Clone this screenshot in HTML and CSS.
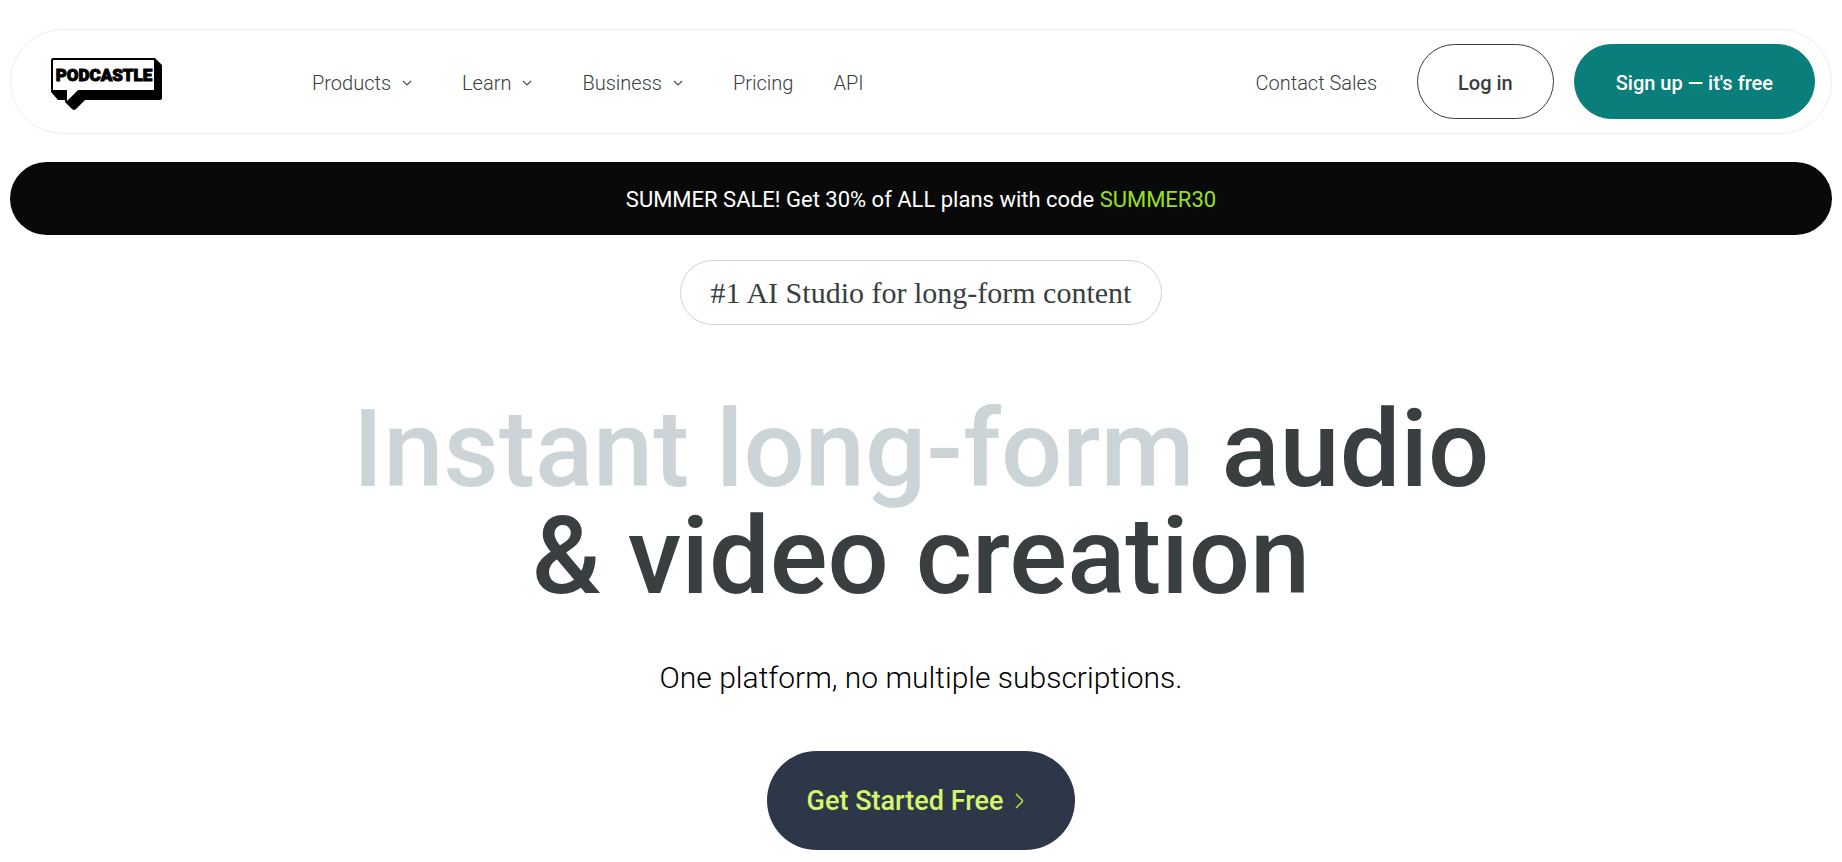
FILE: index.html
```
<!DOCTYPE html>
<html lang="en">
<head>
    <meta charset="UTF-8">
    <meta name="viewport" content="width=device-width, initial-scale=1.0">
    <title>Podcastle</title>
    <link rel="stylesheet" href="styles.css">
</head>
<body>

<header class="header">
    <a href="#" class="logo" aria-label="Podcastle home">
        <svg width="112" height="52" viewBox="0 0 112 52">
            <path d="M2 0H104L111 7V40Q111 42 109 42H34L25 51Q23 53 21 51L14 44V42H7L0 34V2Q0 0 2 0Z" fill="#000"/>
            <path d="M3 2H102Q103 2 103 3V32H27L16 43V32H2V3Q2 2 3 2Z" fill="#fff"/>
            <text x="53" y="23" text-anchor="middle" class="logo-text">PODCASTLE</text>
        </svg>
    </a>

    <nav class="nav">
        <button class="nav-item">Products
            <svg class="chevron" width="10" height="6" viewBox="0 0 10 6"><path d="M1 1L5 5L9 1"/></svg>
        </button>
        <button class="nav-item">Learn
            <svg class="chevron" width="10" height="6" viewBox="0 0 10 6"><path d="M1 1L5 5L9 1"/></svg>
        </button>
        <button class="nav-item">Business
            <svg class="chevron" width="10" height="6" viewBox="0 0 10 6"><path d="M1 1L5 5L9 1"/></svg>
        </button>
        <a href="#" class="nav-link">Pricing</a>
        <a href="#" class="nav-link">API</a>
    </nav>

    <div class="actions">
        <a href="#" class="nav-link contact">Contact Sales</a>
        <button class="btn login">Log in</button>
        <button class="btn signup">Sign up — it's free</button>
    </div>
</header>

<div class="banner">
    <p>SUMMER SALE! Get 30% of ALL plans with code <span class="code">SUMMER30</span></p>
</div>

<main class="hero">
    <p class="badge">#1 AI Studio for long-form content</p>
    <h1 class="title"><span class="muted">Instant long-form</span> audio<br>&amp; video creation</h1>
    <p class="subtitle">One platform, no multiple subscriptions.</p>
    <button class="cta">Get Started Free
        <svg width="10" height="16" viewBox="0 0 10 16"><path d="M1 1L7 7Q8 8 7 9L1 15"/></svg>
    </button>
</main>

</body>
</html>
```
FILE: styles.css
```
* {
    box-sizing: border-box;
}

body {
    margin: 0;
    padding: 29px 10px 0;
    background-color: #fff;
    font-family: Roboto, Arial, sans-serif;
    color: #393e40;
}

p, h1 {
    margin: 0;
}

button {
    font-family: inherit;
    cursor: pointer;
}

/* header */
.header {
    display: flex;
    align-items: center;
    padding: 14px 16px 14px 40px;
    border: 1px solid #eee;
    border-radius: 52px;
}

.logo {
    display: flex;
    margin-right: 149px;
    padding-top: 5px;
}

.logo-text {
    font-size: 17px;
    font-weight: 900;
    fill: #000;
    stroke: #000;
    stroke-width: 1px;
}

.nav {
    display: flex;
    align-items: center;
    gap: 40px;
}

.nav-item, .nav-link {
    display: flex;
    align-items: center;
    gap: 11px;
    padding: 2px 0 0;
    border: none;
    background: none;
    font-size: 20px;
    font-weight: 300;
    line-height: 24px;
    color: #393e40;
    text-decoration: none;
}

.nav-item {
    padding-right: 10px;
}

.chevron {
    fill: none;
    stroke: #4a4e50;
    stroke-width: 1.2;
}

.actions {
    display: flex;
    align-items: center;
    gap: 20px;
    margin-left: auto;
}

.contact {
    margin-right: 20px;
}

.btn {
    height: 75px;
    padding: 2px 40px 0;
    border: 1px solid #393e40;
    border-radius: 38px;
    background-color: #fff;
    font-size: 20px;
    font-weight: 500;
    color: #393e40;
}

.signup {
    padding: 2px 41px 0;
    border-color: #0a7e7a;
    background-color: #0a7e7a;
    color: #fff;
}

/* sale banner */
.banner {
    margin-top: 28px;
    padding: 23px 20px 21px;
    border-radius: 37px;
    background-color: #090909;
    text-align: center;
    font-size: 22px;
    line-height: 29px;
    color: #fff;
}

.code {
    color: #98e020;
}

/* hero */
.hero {
    display: flex;
    flex-direction: column;
    align-items: center;
    margin-top: 25px;
    text-align: center;
}

.badge {
    padding: 14px 30px;
    border: 1px solid #ccd4d6;
    border-radius: 33px;
    font-family: "Liberation Serif", serif;
    font-size: 30px;
    line-height: 35px;
}

.title {
    margin-top: 71px;
    font-size: 108px;
    font-weight: 500;
    line-height: 107px;
}

.muted {
    color: #ccd4d8;
}

.subtitle {
    margin-top: 50px;
    font-size: 30px;
    font-weight: 300;
    line-height: 36px;
    color: #000;
}

.cta {
    display: flex;
    align-items: center;
    gap: 12px;
    height: 99px;
    margin-top: 55px;
    padding: 0 50px 0 40px;
    border: none;
    border-radius: 50px;
    background-color: #2e3748;
    font-size: 27px;
    font-weight: 500;
    color: #d4f56e;
}

.cta svg {
    fill: none;
    stroke: #b4ea3c;
    stroke-width: 1.5;
}
```
